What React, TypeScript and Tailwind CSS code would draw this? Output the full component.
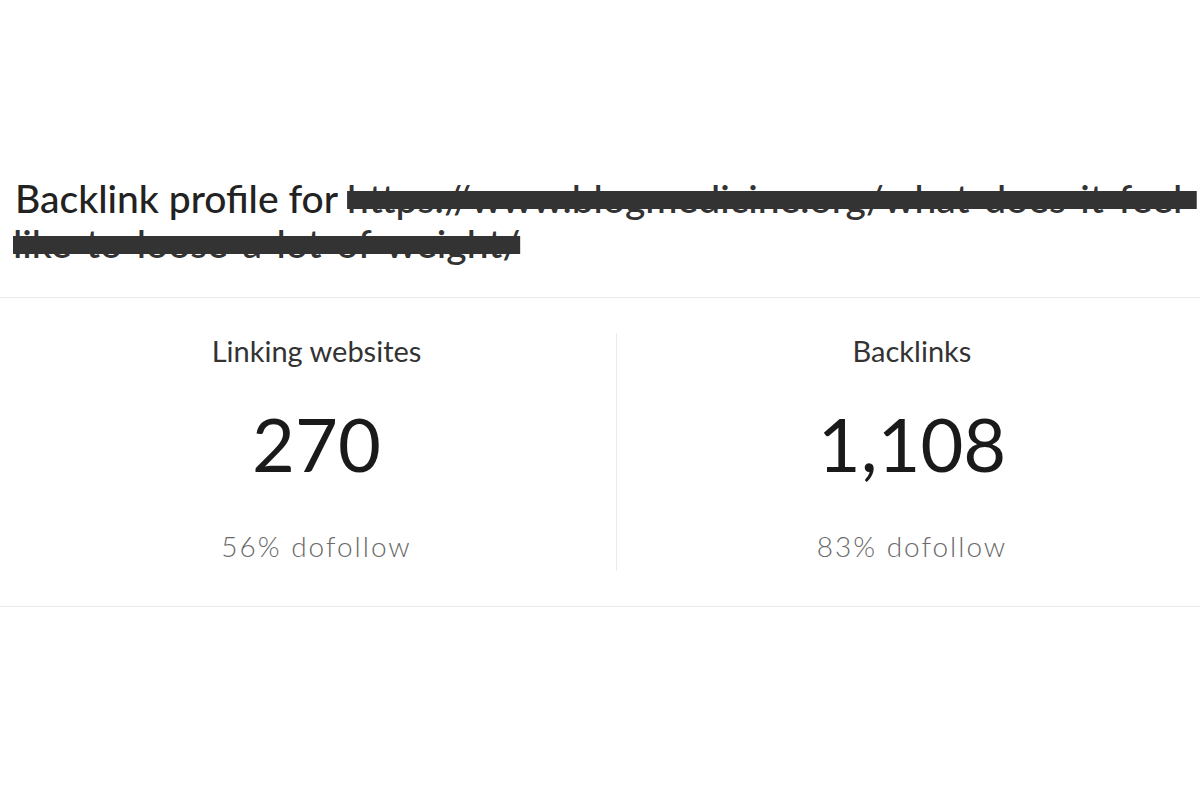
export default function App() {
  return (
    <div
      className="min-h-[800px] w-full overflow-hidden bg-white"
      style={{ fontFamily: "Lato, 'Open Sans', sans-serif" }}
    >
      {/* Heading */}
      <h1 className="pl-[15px] pt-[176px] text-[39px] leading-[45px] font-medium text-[#222]">
        <span className="whitespace-nowrap">Backlink profile for </span>
        <span className="text-[#333] line-through decoration-[#333] decoration-[18px]">
          <span className="whitespace-nowrap">https://www.blogmedicine.org/what-does-it-feel-</span>
          <br />
          <span className="-ml-[2px] whitespace-nowrap">like-to-loose-a-lot-of-weight/</span>
        </span>
      </h1>

      {/* Stats */}
      <div className="mt-[31px] border-y border-[#ebebeb]">
        <div className="flex py-[35px] pl-[17px]">
          <div className="flex w-[600px] shrink-0 flex-col items-center border-r border-[#ebebeb] pt-[1px] pb-[8px]">
            <div className="text-[29px] leading-[34px] text-[#333]">Linking websites</div>
            <div className="mt-[39px] text-[74px] leading-[74px] text-[#1a1a1a]">270</div>
            <div className="mt-[48px] text-[28px] leading-[34px] font-light tracking-[2px] text-[#6a6a6a]">56% dofollow</div>
          </div>
          <div className="flex w-[590px] shrink-0 flex-col items-center pt-[1px] pb-[8px]">
            <div className="text-[29px] leading-[34px] text-[#333]">Backlinks</div>
            <div className="mt-[39px] text-[74px] leading-[74px] text-[#1a1a1a]">1,108</div>
            <div className="mt-[48px] text-[28px] leading-[34px] font-light tracking-[2px] text-[#6a6a6a]">83% dofollow</div>
          </div>
        </div>
      </div>
    </div>
  );
}
